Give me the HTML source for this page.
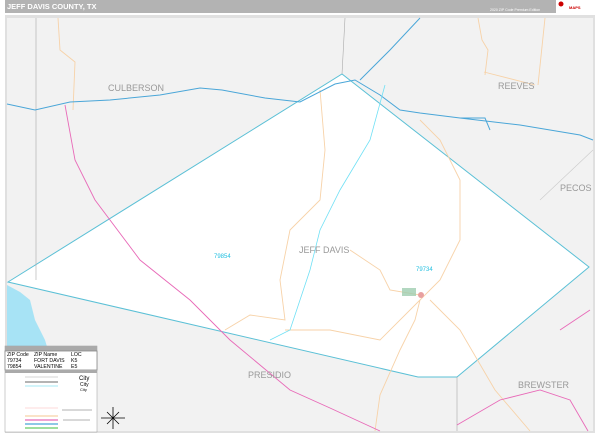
<!DOCTYPE html>
<html><head><style>
body{margin:0;width:600px;height:435px;overflow:hidden;background:#fff;font-family:"Liberation Sans",sans-serif}
</style></head><body>
<svg width="600" height="435" viewBox="0 0 600 435" xmlns="http://www.w3.org/2000/svg" font-family="Liberation Sans, sans-serif">
<rect x="0" y="0" width="600" height="435" fill="#fff"/>
<rect x="5" y="0" width="590" height="13" fill="#b3b3b3"/>
<text x="7" y="9" font-size="7.5" font-weight="bold" fill="#fff">JEFF DAVIS COUNTY, TX</text>
<text x="490" y="11" font-size="3.5" fill="#fff">2020 ZIP Code Premium Edition</text>
<rect x="556" y="0" width="39" height="13" fill="#fff"/>
<circle cx="561" cy="4" r="2.5" fill="#c00"/>
<text x="569" y="9" font-size="4" fill="#c00" font-weight="bold">MAPS</text>
<rect x="5" y="15" width="590" height="418" fill="#e0e0e0"/>
<rect x="7" y="18" width="586" height="413" fill="#f2f2f2"/>
<!-- county -->
<polygon points="8,282 342,74 589,267 457,377 418,377" fill="#fff" stroke="#5bc0d6" stroke-width="1"/>
<!-- county borders -->
<path d="M36,18 L36,280 M345,18 L342,74 M457,377 L457,431" stroke="#aaa" stroke-width="0.6" fill="none"/>
<path d="M540,200 L593,150" stroke="#ccc" stroke-width="0.6" fill="none"/>
<!-- roads orange -->
<g stroke="#f7d2a8" stroke-width="0.9" fill="none">
<path d="M58,18 L60,50 L75,62 L73,110"/>
<path d="M478,18 L482,40 L488,50 L485,75"/>
<path d="M545,18 L538,85"/>
<path d="M484,72 L535,85"/>
<path d="M320,90 L325,150 L320,200 L290,230 L280,280 L285,320 L250,315 L225,330"/>
<path d="M285,330 L330,330 L380,340 L420,300 L440,280 L460,240 L460,180 L440,140 L420,120"/>
<path d="M420,300 L415,320 L400,350 L380,395 L375,431"/>
<path d="M430,300 L460,330 L495,390 L530,431"/>
<path d="M350,250 L380,270 L390,290 L420,295"/>
</g>
<!-- streams blue -->
<g stroke="#4aa6d8" stroke-width="1" fill="none">
<path d="M7,104 L35,110 L70,102 L110,100 L160,95 L200,88 L222,90 L265,98 L300,102 L335,84 L355,80 L380,95 L400,110 L420,113 L460,118 L520,125 L580,135 L593,140"/>
<path d="M420,18 L390,50 L370,70 L360,80"/>
<path d="M460,118 L485,118 L490,130"/>
</g>
<path d="M385,85 L370,140 L340,190 L320,230 L310,270 L300,300 L290,330 L270,340" stroke="#6fe0f5" stroke-width="0.8" fill="none"/>
<!-- pink highway -->
<g stroke="#e86ab8" stroke-width="0.9" fill="none">
<path d="M65,105 L75,160 L95,200 L140,260 L190,300 L230,340 L290,390 L330,408 L380,431"/>
<path d="M457,425 L500,400 L540,390 L570,400 L588,431"/>
<path d="M560,330 L590,310"/>
</g>
<!-- lake -->
<path d="M7,285 L20,292 L30,300 L35,320 L45,340 L48,350 L7,350 Z" fill="#a7e3f5"/>
<!-- town -->
<rect x="402" y="288" width="14" height="8" fill="#9fcdb0" opacity="0.8"/>
<circle cx="421" cy="295" r="3" fill="#e8a0a0"/>
<!-- labels -->
<g fill="#999" font-size="9">
<text x="108" y="91">CULBERSON</text>
<text x="498" y="89">REEVES</text>
<text x="560" y="191">PECOS</text>
<text x="299" y="253">JEFF DAVIS</text>
<text x="248" y="378">PRESIDIO</text>
<text x="518" y="388">BREWSTER</text>
</g>
<text x="214" y="258" font-size="6" fill="#22bfe0">79854</text>
<text x="416" y="271" font-size="6" fill="#22bfe0">79734</text>
<!-- legend -->
<rect x="5" y="346" width="92" height="86" fill="#fff" stroke="#999" stroke-width="0.5"/>
<rect x="5" y="346" width="92" height="5" fill="#aaa"/>
<rect x="5" y="351" width="92" height="19" fill="#fff" stroke="#888" stroke-width="0.8"/>
<g font-size="5.2" fill="#000">
<text x="7" y="356">ZIP Code</text><text x="34" y="356">ZIP Name</text><text x="71" y="356">LOC</text>
<text x="7" y="362">79734</text><text x="34" y="362">FORT DAVIS</text><text x="71" y="362">K5</text>
<text x="7" y="368">79854</text><text x="34" y="368">VALENTINE</text><text x="71" y="368">E5</text>
</g>
<rect x="5" y="370" width="92" height="3" fill="#aaa"/>
<g stroke-width="1.2">
<line x1="25" y1="377" x2="58" y2="377" stroke="#ddd"/>
<line x1="25" y1="382" x2="58" y2="382" stroke="#888"/>
<line x1="25" y1="386" x2="58" y2="386" stroke="#b8eef8"/>
<line x1="25" y1="408" x2="58" y2="408" stroke="#fde0e0"/>
<line x1="25" y1="416" x2="58" y2="416" stroke="#f7d2a8"/>
<line x1="25" y1="420" x2="58" y2="420" stroke="#e86ab8"/>
<line x1="25" y1="424" x2="58" y2="424" stroke="#4aa6d8"/>
<line x1="25" y1="428" x2="58" y2="428" stroke="#6c6"/>
</g>
<text x="79" y="380" font-size="6">City</text>
<text x="80" y="386" font-size="5">City</text>
<text x="80" y="391" font-size="4">City</text>
<path d="M62,410 L92,410 M63,420 L90,420" stroke="#666" stroke-width="0.5"/>
<!-- compass -->
<g stroke="#000" stroke-width="0.8">
<line x1="113" y1="407" x2="113" y2="429"/><line x1="101" y1="418" x2="125" y2="418"/>
<line x1="107" y1="412" x2="119" y2="424"/><line x1="119" y1="412" x2="107" y2="424"/>
</g>
</svg>
</body></html>
